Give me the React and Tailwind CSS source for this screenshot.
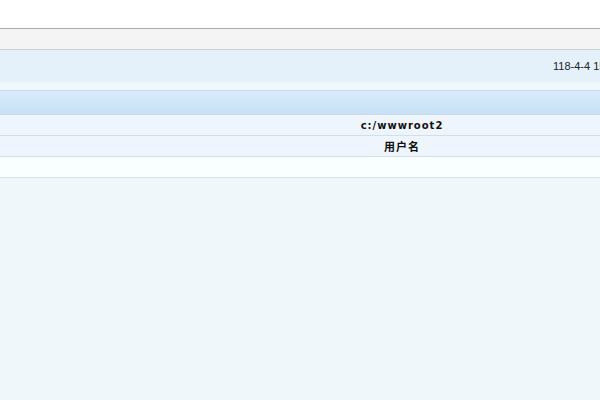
export default function App() {
  return (
    <div className="w-[600px] h-[400px] overflow-hidden bg-[#f0f7fa] flex flex-col" style={{ fontFamily: '"Liberation Sans", Arial, sans-serif' }}>
      <div className="h-[28px] bg-white shrink-0" />
      <div className="h-[1px] bg-[#a9a9a9] shrink-0" />
      <div className="h-[20px] bg-[#f4f4f4] shrink-0" />
      <div className="h-[1px] bg-[#cfcfcf] shrink-0" />
      <div className="h-[32px] bg-[#e4f1fb] shrink-0 flex items-center overflow-hidden">
        <span className="ml-[553px] whitespace-nowrap text-[11px] text-[#222]">118-4-4 15:30:21</span>
      </div>
      <div className="h-[8px] bg-[#eff7fa] shrink-0" />
      <div className="h-[1px] bg-[#c7d9ea] shrink-0" />
      <div className="h-[23px] bg-gradient-to-b from-[#d8ebfa] to-[#c8e1f7] shrink-0" />
      <div className="h-[1px] bg-[#c9dbea] shrink-0" />
      <div className="h-[20px] bg-[#eef5fd] shrink-0 flex items-center overflow-hidden">
        <div className="w-[804px] shrink-0 text-center text-[10px] font-bold tracking-[1px] text-[#111]" style={{ fontFamily: '"DejaVu Sans", Verdana, sans-serif' }}>c:/wwwroot2</div>
      </div>
      <div className="h-[1px] bg-[#d0dfec] shrink-0" />
      <div className="h-[20px] bg-[#eef5fd] shrink-0 flex items-center overflow-hidden">
        <div className="w-[804px] shrink-0 text-center text-[11px] font-bold tracking-[1px] text-[#111]" style={{ fontFamily: '"Noto Sans CJK SC", sans-serif' }}>用户名</div>
      </div>
      <div className="h-[1px] bg-[#d0dfec] shrink-0" />
      <div className="h-[20px] bg-[#f9fefe] shrink-0" />
      <div className="h-[1px] bg-[#d6e3ec] shrink-0" />
      <div className="flex-1" />
    </div>
  );
}
